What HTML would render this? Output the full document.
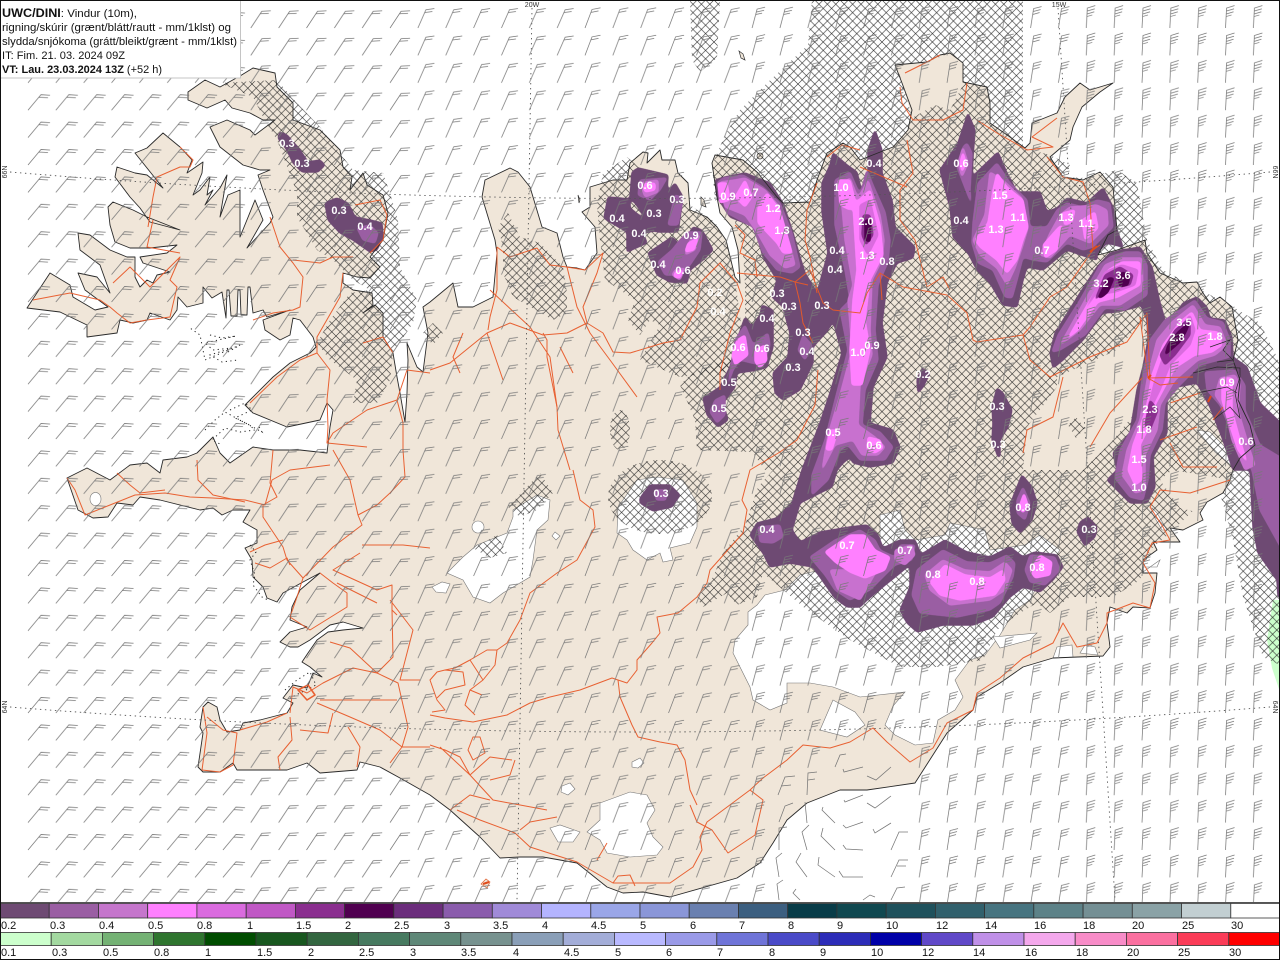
<!DOCTYPE html>
<html lang="is">
<head>
<meta charset="utf-8">
<title>UWC/DINI</title>
<style>
html,body{margin:0;padding:0;background:#fff}
svg{display:block}
.l{font:11px "Liberation Sans",sans-serif;fill:#111}
.v{font:bold 11px "Liberation Sans",sans-serif;fill:#fff;text-anchor:middle}
.h{font:11px "Liberation Sans",sans-serif;fill:#111}
.g{font:7px "Liberation Sans",sans-serif;fill:#333}
</style>
</head>
<body>
<svg xmlns="http://www.w3.org/2000/svg" width="1280" height="960" viewBox="0 0 1280 960">
<defs>
<filter id="s" filterUnits="userSpaceOnUse" x="0" y="0" width="1280" height="960" color-interpolation-filters="sRGB"><feGaussianBlur stdDeviation="1.5"/><feComponentTransfer><feFuncA type="linear" slope="6" intercept="-2.5"/></feComponentTransfer></filter>
<pattern id="x" patternUnits="userSpaceOnUse" width="8.4" height="8.4"><path d="M0,0L8.4,8.4M8.4,0L0,8.4" stroke="#222" stroke-width=".6" fill="none"/></pattern>
<pattern id="p1" patternUnits="userSpaceOnUse" x="26" y="1.6" width="27.85" height="27.4"><path d="M2,26.4L15,10.9L24,11.4M13,13.4L22,13.9" fill="none" stroke="#777" stroke-width=".75"/></pattern>
<pattern id="p2" patternUnits="userSpaceOnUse" x="26" y="1.6" width="27.85" height="27.4"><path d="M2,26.4L13,9.7L22,9.2M11.6,12.2L20,11.7" fill="none" stroke="#777" stroke-width=".75"/></pattern>
<pattern id="p3" patternUnits="userSpaceOnUse" x="26" y="1.6" width="27.85" height="27.4"><path d="M2,26.4L10,8.2L18.5,7M8.8,11L16.5,10" fill="none" stroke="#777" stroke-width=".75"/></pattern>
<pattern id="p4" patternUnits="userSpaceOnUse" x="26" y="1.6" width="27.85" height="27.4"><path d="M2,26.4L9,7.9L17.5,6.2M8,10.8L15.5,9.3" fill="none" stroke="#777" stroke-width=".75"/></pattern>
<pattern id="p5" patternUnits="userSpaceOnUse" x="26" y="1.6" width="27.85" height="27.4"><path d="M2,26.4L7,7.5L15,5.6M6.2,10.5L14,8.7M5.5,13L12,11.6" fill="none" stroke="#777" stroke-width=".75"/></pattern>
<pattern id="p6" patternUnits="userSpaceOnUse" x="26" y="1.6" width="27.85" height="27.4"><path d="M2,26.4L5,7L13,5M4.5,10L12,8M4,13L11,11" fill="none" stroke="#777" stroke-width=".75"/></pattern>
<pattern id="p7" patternUnits="userSpaceOnUse" x="26" y="1.6" width="27.85" height="27.4"><path d="M2,26.4L3,6.5L11,4M2.8,9.5L10.5,7.2M2.6,12.5L10,10.2M2.4,15L8,13.4" fill="none" stroke="#777" stroke-width=".75"/></pattern>
<path id="land" d="M188,92 205,80 220,87 240,76 253,68 275,73 277,87 293,103 293,120 320,130 340,150 343,167 352,177 350,190 363,173 367,185 383,195 388,213 383,240 370,257 380,267 370,278 357,277 343,273 343,283 353,290 372,293 373,305 363,313 375,305 383,313 383,337 393,353 397,377 400,393 405,422 407,393 408,360 407,343 417,367 423,372 428,333 423,307 430,302 453,283 458,307 473,307 493,297 497,253 495,240 482,197 485,180 510,168 518,172 530,187 542,227 557,233 563,257 567,267 577,268 585,270 597,253 595,227 582,212 590,207 590,187 613,180 627,180 630,163 643,152 648,153 647,163 660,150 662,160 675,160 678,173 688,183 690,210 707,217 717,227 726,240 735,277 740,283 738,250 732,227 720,213 717,197 712,163 715,155 743,160 758,173 777,197 783,203 810,202 817,180 827,153 843,143 850,147 860,160 893,147 908,130 912,110 902,83 895,65 927,62 940,55 950,53 963,63 963,82 987,87 990,103 990,123 1010,137 1025,148 1030,143 1032,123 1057,113 1065,97 1080,83 1090,90 1113,83 1100,92 1082,107 1073,127 1070,140 1050,157 1063,177 1083,180 1100,172 1113,187 1117,230 1108,235 1098,255 1117,250 1145,240 1147,253 1160,273 1183,283 1197,282 1203,293 1210,303 1220,297 1232,307 1238,340 1233,360 1240,380 1238,400 1250,425 1255,445 1240,458 1233,470 1230,480 1223,493 1207,502 1200,513 1203,520 1183,530 1170,528 1180,542 1153,542 1157,550 1143,560 1143,573 1157,573 1155,593 1150,608 1133,607 1127,613 1110,607 1107,623 1110,647 1103,656 1053,658 1023,667 1000,683 977,697 973,710 947,733 915,783 867,790 840,790 807,803 787,820 773,843 760,863 737,878 670,897 643,892 623,893 607,887 577,863 543,857 520,857 500,858 480,837 450,810 430,795 400,778 380,767 360,762 357,770 320,773 307,763 287,770 257,770 237,770 233,763 220,772 203,772 198,767 203,733 200,727 203,707 208,702 217,707 220,720 227,732 240,730 243,723 260,720 287,713 293,703 283,698 293,685 307,688 313,673 322,677 310,667 302,662 308,653 317,640 328,632 343,630 363,628 343,622 330,625 310,640 298,647 290,647 280,642 290,632 307,627 290,620 292,607 300,590 320,573 303,582 283,593 277,602 267,598 263,587 253,577 252,560 245,548 257,543 257,530 243,522 250,510 233,510 222,515 213,508 200,510 160,500 140,497 133,505 117,503 108,517 93,518 78,510 67,478 87,468 110,480 130,465 147,463 160,473 163,460 187,457 197,453 213,437 220,453 230,463 253,447 273,450 300,450 327,453 330,427 333,410 327,403 320,420 287,427 253,413 245,405 273,377 290,363 310,353 316,347 313,337 300,320 293,318 290,335 280,340 265,330 263,320 290,310 267,317 263,310 253,313 250,287 248,287 247,315 241,315 240,290 238,290 237,316 231,316 229,290 227,290 226,318 222,292 212,298 203,287 203,303 187,307 178,297 177,310 170,320 150,313 147,320 133,323 120,320 117,333 87,337 87,325 60,312 27,308 50,273 70,285 73,297 95,310 108,307 85,290 78,273 97,277 110,293 100,265 80,250 78,233 90,235 110,250 127,257 135,257 135,277 140,287 147,280 153,283 157,275 170,272 143,263 140,257 167,253 177,245 150,248 130,248 115,242 110,225 108,207 113,202 133,210 147,217 180,230 150,222 140,208 130,197 115,177 117,167 135,173 147,175 163,188 155,178 135,153 147,148 163,133 180,147 192,160 187,173 203,162 202,173 193,195 200,190 210,177 207,195 213,190 205,205 220,188 227,175 220,217 228,195 240,190 240,237 255,200 263,220 247,248 270,223 273,217 263,190 258,175 270,170 260,170 243,165 220,147 210,127 227,120 250,130 255,135 275,120 263,120 250,113 232,108 225,100 207,108 188,100Z"/>
</defs>
<rect width="1280" height="960" fill="#fff"/>

<!-- green precip at east edge -->
<path d="M1280,600 1273,600 1267,640 1272,668 1280,692Z" fill="#ccffcc"/>

<!-- land -->
<use href="#land" fill="#f0e6d9"/>

<!-- glaciers and lakes -->
<g fill="#fff" stroke="#777" stroke-width=".6">
<path d="M513,510 537,495 550,500 548,520 537,530 533,560 530,577 503,593 490,603 473,597 463,580 447,573 463,557 477,545 507,533 513,517Z"/>
<path d="M618,507 637,480 657,477 683,480 697,503 697,527 690,543 670,548 673,560 663,562 660,553 647,560 633,550 627,540 617,533Z"/>
<path d="M600,803 630,792 647,795 655,810 647,823 653,837 663,847 657,855 630,857 607,853 600,840 587,832 600,820Z"/>
<path d="M550,828 560,825 580,832 573,842 558,842Z"/>
<path d="M748,612 757,605 765,595 785,590 800,575 840,565 880,540 880,515 900,510 905,530 915,540 945,535 950,523 985,530 990,550 1025,545 1040,535 1060,550 1040,580 1030,600 1015,610 1000,635 985,655 970,660 955,680 963,697 955,710 938,720 933,743 915,745 905,740 895,735 885,725 893,706 905,692 860,697 833,687 810,683 787,683 787,703 770,710 753,700 750,687 743,673 733,653 735,640 748,625Z"/>
<path d="M833,700 820,730 847,737 865,725 855,712Z"/>
<path d="M472,527a6,6 0 1,0 12,0a6,6 0 1,0 -12,0Z"/>
<path d="M90,499a5,6 0 1,0 11,0a5,6 0 1,0 -11,0Z"/>
<path d="M555,532 560,536 556,540 552,536Z"/>
<path d="M432,587 442,582 450,584 446,593 436,592Z"/>
<path d="M562,786 570,783 575,789 568,795 561,792Z"/>
<path d="M632,762 640,758 644,763 638,768 632,767Z"/>
<path d="M1057,647 1072,645 1073,657 1053,658Z"/>
<path d="M1080,653 1085,645 1095,647 1098,655Z"/>
<path d="M1143,567 1157,567 1160,560 1143,572Z"/>
<path d="M1152,508 1157,513 1167,530 1162,530 1152,513Z"/>
<path d="M1208,488 1225,490 1208,492Z"/>
<path d="M1197,430 1210,432 1233,455 1233,467 1215,452Z"/>
<path d="M993,637 1037,633 1030,640 1000,648Z"/>
</g>
<!-- islands -->
<g fill="#f0e6d9" stroke="#333" stroke-width=".7">
<path d="M739,51 743,54 745,60 741,58Z"/>
<path d="M701,197 704,200 706,207 701,205Z"/>
<path d="M578,195 580,200 579,203Z"/>
<path d="M757,156a3,3 0 1,0 6,0a3,3 0 1,0 -6,0Z"/>
<path d="M481,884 486,879 490,882 487,888Z" stroke="#e0602e"/>
</g>
<g fill="none" stroke="#222" stroke-width="1" stroke-dasharray="1.2 3.4">
<path d="M210,335 222,338 236,336 205,343 213,350 232,348 210,355 222,362 238,360"/>
<path d="M228,352 240,345 205,360 200,335 190,328"/>
<path d="M230,410 245,403 252,410 235,418 248,424 255,430 240,432 225,428 212,440 222,445"/>
<path d="M205,430 215,420 225,412 262,432 258,425"/>
<path d="M250,545 256,552 250,560 255,575 253,585 262,597 268,600"/>
<path d="M285,690 297,680 310,672 316,685 290,698"/>
</g>

<!-- snow hatch -->
<g fill="url(#x)">
<path d="M220,83 277,80 297,103 320,127 343,157 353,170 383,173 390,193 398,220 400,267 417,300 413,323 393,353 390,380 377,403 353,403 357,380 330,360 317,343 330,320 350,293 370,290 353,280 333,260 317,250 297,217 297,193 277,140 263,117 253,97Z"/>
<path d="M508,213 520,237 540,243 563,267 567,293 567,313 553,320 513,297 503,273 503,247 498,227Z"/>
<path d="M433,323 443,333 433,345 423,333Z"/>
<ellipse cx="620" cy="430" rx="10" ry="20"/>
<ellipse cx="660" cy="497" rx="52" ry="37"/>
<path d="M508,507 540,473 553,493 537,510 520,517Z"/>
<path d="M473,548 497,535 507,553 490,558Z"/>
<path d="M690,0 720,0 717,58 700,72 692,60Z"/>
<path d="M603,173 627,157 660,185 690,205 715,222 727,245 735,280 742,330 742,370 680,377 640,360 660,325 650,320 640,335 628,320 635,300 605,280 600,240 597,205Z"/>
<path d="M812,0 1023,0 1023,148 1032,150 1050,155 1070,165 1063,177 1085,178 1117,170 1137,183 1147,240 1163,270 1233,307 1260,323 1277,357 1280,365 1280,665 1263,657 1243,597 1233,540 1222,500 1217,490 1197,507 1170,533 1150,550 1140,580 1113,597 1070,597 1050,613 1037,603 1020,613 997,630 983,660 937,667 900,667 850,640 807,610 763,573 757,597 737,605 727,593 703,607 697,598 713,577 723,553 745,525 758,487 773,470 765,470 752,452 697,450 695,420 680,385 690,375 745,350 745,285 743,250 733,215 715,200 712,165 725,135 740,110 765,85 808,45Z"/>
</g>
<!-- unhatched land windows -->
<g fill="#f0e6d9">
<path d="M897,65 927,62 950,53 963,63 963,85 950,110 935,105 912,118 910,110Z"/>
<path d="M1057,377 1117,350 1143,320 1150,373 1140,407 1113,440 1083,470 1023,470 1027,427 1057,387Z"/>
<path d="M1160,480 1172,470 1232,480 1222,493 1207,502 1200,513 1180,508Z"/>
</g>
<path d="M1068,425 1076,417 1085,428 1076,438Z" fill="url(#x)"/>

<!-- precipitation -->
<g stroke-linejoin="round" stroke-width="1.5">
<path filter="url(#s)" fill="#6e4a73" stroke="#6e4a73" d="M280,132 287,135 300,150 308,162 320,160 325,165 318,172 302,172 293,163 287,150 278,138Z
M325,203 337,198 348,203 355,217 370,220 382,223 383,237 377,250 370,252 353,240 340,233 328,220Z
M632,172 638,168 668,175 667,193 675,183 683,197 678,232 657,232 652,223 645,217 635,203 630,197Z
M608,197 630,199 630,208 647,222 660,230 643,233 647,243 627,252 627,232 610,222 604,218Z
M672,237 678,243 677,257 685,240 693,227 702,230 713,250 703,260 690,270 687,283 670,282 657,275 652,263 648,253Z
M715,180 725,177 745,173 770,183 783,203 793,233 800,257 805,273 817,293 828,253 822,212 822,183 830,165 833,153 847,165 857,172 862,193 868,175 868,150 875,130 882,150 882,173 892,200 895,227 915,247 913,258 897,263 887,283 882,323 887,357 873,387 870,423 893,430 900,447 893,463 870,467 853,463 850,457 843,463 837,470 832,487 800,503 792,530 800,542 820,532 850,527 867,525 878,535 883,548 900,540 915,540 920,552 907,567 900,573 885,585 867,600 860,607 847,607 835,598 827,587 813,567 790,563 770,567 763,553 750,535 757,523 777,518 792,503 802,470 820,423 830,393 842,353 833,320 828,330 813,347 813,363 800,390 783,400 775,393 773,373 788,357 790,333 783,307 772,297 777,280 763,257 755,227 730,217 717,197Z
M968,113 975,130 973,157 972,180 977,172 998,152 1007,173 1017,192 1040,192 1047,212 1057,208 1067,198 1087,203 1093,197 1103,188 1113,207 1117,230 1123,247 1107,243 1097,253 1097,260 1087,257 1067,250 1043,270 1027,267 1023,280 1017,307 1003,305 990,283 977,270 968,253 953,237 950,207 940,170 958,143Z
M1143,252 1152,267 1160,303 1167,327 1183,303 1197,297 1207,307 1210,318 1225,320 1232,337 1233,357 1247,367 1260,403 1285,427 1285,597 1278,597 1277,580 1258,553 1253,527 1250,470 1233,470 1223,440 1210,407 1197,383 1177,387 1167,400 1167,433 1153,457 1155,487 1147,503 1130,503 1107,480 1117,470 1113,453 1130,433 1137,390 1143,367 1148,340 1147,320 1140,303 1137,307 1117,312 1103,313 1083,340 1063,360 1053,368 1050,353 1055,333 1080,293 1097,267 1110,253 1123,250 1140,247Z
M640,498 650,485 670,485 680,495 672,507 653,511 640,503Z
M917,380 922,368 930,373 923,387 918,393Z
M997,388 1003,393 1012,410 1008,427 1000,440 1000,457 998,457 992,440 993,423 992,407Z
M1022,475 1032,487 1037,503 1032,520 1020,533 1012,523 1010,505 1017,487Z
M1088,517 1097,527 1095,537 1085,546 1077,532 1080,522Z
M900,610 910,587 910,563 920,555 945,540 967,552 990,557 1010,547 1023,557 1035,552 1057,555 1063,567 1053,580 1040,592 1023,587 1010,597 993,617 973,625 943,625 917,632 907,623Z
M745,317 752,327 760,315 762,305 773,310 773,347 767,367 758,370 737,373 735,387 723,403 728,420 718,427 707,415 703,398 720,387 730,367 738,337Z"/>
<path filter="url(#s)" fill="#9a5ea3" stroke="#9a5ea3" d="M357,228 370,225 378,233 375,243 363,240Z
M640,180 667,178 660,190 650,200 638,195Z
M675,195 683,198 678,225 668,225Z
M688,232 702,232 700,250 690,265 680,275 665,275 658,262 672,250 680,240Z
M717,183 723,178 743,175 763,187 780,203 792,233 800,267 792,273 777,270 763,253 753,227 727,213Z
M835,180 850,172 860,195 867,170 873,185 885,212 890,240 888,262 878,285 875,330 878,360 865,390 862,425 880,432 893,447 885,460 860,460 848,445 840,450 828,480 812,495 812,475 825,440 835,400 848,350 840,310 850,300 845,270 835,225Z
M967,143 972,153 970,190 971,203 957,167 963,147Z
M997,163 1010,183 1027,200 1030,227 1047,227 1057,210 1067,203 1083,207 1097,200 1110,203 1113,227 1093,247 1083,250 1067,243 1047,262 1033,260 1023,257 1017,280 1012,298 1005,297 993,270 978,263 972,243 973,223 978,183Z
M1052,352 1058,335 1080,300 1100,265 1110,257 1125,252 1140,252 1147,265 1147,295 1125,310 1105,308 1085,335 1060,350Z
M1195,300 1207,318 1223,322 1230,340 1230,357 1200,365 1190,375 1180,385 1165,403 1162,430 1150,455 1148,480 1143,500 1130,497 1115,478 1120,450 1137,420 1142,380 1150,340 1165,320Z
M1205,372 1235,370 1245,385 1245,410 1260,445 1285,460 1285,555 1260,510 1252,470 1235,440 1220,405 1207,390Z
M656,490 666,490 666,500 656,500Z
M1023,487 1030,503 1025,520 1017,513 1017,500Z
M912,595 917,570 943,550 967,562 990,563 1007,555 1015,563 1013,577 1000,603 990,610 957,617 920,613Z
M1025,570 1030,555 1055,557 1060,570 1045,585 1030,582Z
M810,557 835,540 860,530 875,540 880,550 895,557 900,545 915,545 912,560 895,565 870,590 850,600 835,590 825,575Z
M758,527 780,525 783,537 773,543 760,542Z
M745,325 753,345 768,333 770,345 763,365 752,363 740,360 733,370 728,385 735,340Z
M715,400 725,395 725,415 717,423 710,412Z
M803,335 812,345 805,360 798,350Z"/>
<path filter="url(#s)" fill="#c871cf" stroke="#c871cf" d="M720,182 735,180 745,178 765,190 778,205 790,245 795,265 785,268 770,255 757,232 745,215 725,207Z
M840,185 850,178 858,198 868,180 880,215 884,240 882,260 872,280 870,330 872,355 860,385 858,425 875,437 885,447 878,455 862,455 853,440 835,445 822,470 828,435 840,395 852,350 848,300 853,285 845,240Z
M963,147 968,163 962,177 958,163Z
M990,172 1003,180 1022,198 1028,228 1022,248 1015,268 1007,285 997,268 980,255 973,240 985,215Z
M1050,233 1060,215 1070,207 1097,205 1107,210 1108,225 1090,243 1070,235 1050,258 1040,255Z
M1060,345 1085,300 1105,265 1122,258 1142,258 1143,290 1120,305 1100,305 1080,330Z
M1193,305 1205,325 1220,327 1227,345 1215,355 1198,360 1175,380 1160,405 1157,430 1145,455 1145,490 1135,493 1122,475 1127,450 1140,420 1148,375 1157,340 1172,322Z
M1220,378 1235,375 1240,385 1238,410 1250,450 1255,465 1245,470 1232,440 1225,410 1215,395Z
M690,240 700,235 695,250 685,255Z
M675,270 685,268 680,280 672,275Z
M930,590 925,575 943,560 965,570 990,572 1005,562 1012,570 1005,590 990,600 950,605Z
M895,550 912,545 915,555 905,565 895,560Z
M855,570 880,565 860,600 838,590 830,570Z
M640,183 658,180 658,192 645,197Z"/>
<path filter="url(#s)" fill="#ff80ff" stroke="#ff80ff" d="M718,183 727,183 730,200 720,203Z
M767,193 780,210 792,253 783,253 777,243 758,223 758,207Z
M745,180 752,197 745,207 735,197Z
M838,180 850,180 855,200 850,210 840,205Z
M853,205 870,190 880,225 883,255 870,280 865,320 870,350 862,385 852,385 850,350 853,300 857,270Z
M830,430 838,430 832,450 826,450Z
M868,437 880,440 883,448 875,453 867,450Z
M963,152 966,163 962,172 960,163Z
M997,173 1007,187 1023,200 1028,227 1023,240 1017,260 1007,273 997,260 980,247 975,240 988,223 993,190Z
M1043,245 1058,228 1062,225 1057,250 1045,258Z
M1062,213 1075,210 1072,222 1065,225Z
M1082,220 1095,212 1098,228 1085,240Z
M1068,338 1090,300 1108,270 1122,262 1140,262 1140,285 1118,297 1098,302 1078,330Z
M1192,312 1200,330 1218,332 1222,345 1212,352 1195,355 1175,368 1155,405 1150,425 1140,445 1142,480 1135,485 1128,470 1133,445 1146,410 1152,375 1163,345 1180,322Z
M1222,378 1232,378 1232,410 1240,440 1247,462 1238,450 1228,420 1222,400Z
M1024,493 1028,505 1023,513 1019,507Z
M930,582 945,565 965,575 990,578 1003,570 1005,580 995,595 960,600 940,595Z
M1030,570 1040,555 1052,562 1050,575 1035,578Z
M825,552 850,535 865,535 875,550 890,557 885,570 865,578 850,572 835,562Z
M737,340 745,335 748,355 735,365 732,355Z
M755,350 765,345 767,360 760,368 755,362Z
M688,243 698,238 694,250 685,252Z
M675,272 683,270 680,278 674,277Z
M642,184 655,183 655,190 645,192Z"/>
<path filter="url(#s)" fill="#da6bdf" stroke="#da6bdf" d="M860,205 870,200 878,235 868,255 860,240Z
M1085,310 1105,272 1122,265 1138,270 1135,285 1115,292 1095,295Z
M1190,315 1195,330 1190,345 1170,365 1160,390 1150,410 1145,420 1155,380 1167,345 1182,325Z"/>
<path filter="url(#s)" fill="#8a2e8f" stroke="#8a2e8f" d="M863,215 870,215 873,235 866,245 862,235Z
M1095,300 1105,275 1120,267 1133,275 1130,285 1112,287 1100,295Z
M1190,318 1190,335 1175,355 1165,365 1160,355 1175,330Z
M1150,400 1158,410 1150,430 1145,425Z"/>
<path filter="url(#s)" fill="#500050" stroke="#500050" d="M865,220 871,220 870,242 865,240Z
M1098,298 1108,278 1114,278 1108,292 1102,297Z
M1122,272 1130,275 1128,285 1120,287 1118,278Z
M1190,322 1186,332 1180,342 1165,355 1168,345 1178,332Z"/>
</g>

<!-- coast outline -->
<use href="#land" fill="none" stroke="#2a2a2a" stroke-width=".9" stroke-linejoin="round"/>
<g fill="none" stroke="#2a2a2a" stroke-width=".7">
<path d="M1210,347 1230,340 1223,350 1233,360 1217,362"/>
<path d="M1193,373 1217,367 1240,368 1240,377 1235,393 1237,403 1240,418 1230,407 1213,420"/>
<path d="M1197,393 1227,387 1237,393"/>
</g>

<!-- roads -->
<g fill="none" stroke="#e85a2a" stroke-width="1" stroke-linejoin="round" opacity=".95">
<path d="M67,478 75,490 85,515 110,505 135,495 165,493 190,497 213,498 245,500 265,505 272,480 290,470 330,465"/>
<path d="M117,473 130,485 140,493 165,490M197,460 198,480 213,495 245,502"/>
<path d="M273,450 270,483 277,497 263,505 263,517 283,547 287,560 303,578 333,547 362,525 358,515 350,480 333,450"/>
<path d="M358,515 377,505 390,493 405,477 403,450 403,423 397,400 407,370 430,373"/>
<path d="M250,552 265,545 283,540M255,563 270,568 287,558 290,565"/>
<path d="M303,578 297,597 290,617 310,630 347,607 347,593 333,583 320,573M337,583 377,603"/>
<path d="M362,545 403,545 430,548M360,553 333,570 377,590 392,585 392,610 397,615"/>
<path d="M392,610 393,657 377,673 350,648 330,642M390,600 413,630 400,680 420,680"/>
<path d="M317,703 350,717 380,730 402,747 430,747M290,713 293,687 307,693 323,683 353,668 377,673 398,683 408,727 402,747 390,763"/>
<path d="M203,707 207,733 202,770 220,772 233,765 237,733 223,730 207,717M287,713 267,722 240,730"/>
<path d="M290,717 292,740 278,757 280,770M300,730 328,733 333,713M348,727 360,747 357,767M320,700 337,700 397,700"/>
<path d="M298,690 307,700 315,695 308,685Z" stroke-width="1.6"/>
<path d="M430,715 445,718 473,722 507,715 530,703 550,697 580,690 612,678 627,683 637,670 637,660 652,643 660,633 657,617 678,613 697,597 707,583 710,570 743,533 747,510 742,500 750,470 780,452 797,440 815,405 818,370"/>
<path d="M573,470 580,500 593,510 595,527 577,560 557,573 530,593 520,620 507,643 497,650 487,650 470,660"/>
<path d="M543,333 547,340 547,357 557,407 558,430 570,470"/>
<path d="M470,660 455,668 445,670 437,672 430,680 437,700 445,710 432,712M470,660 483,680 495,665 497,650M483,680 470,690 465,705 475,715M470,690 482,695M445,670 463,672 465,685 445,690 437,698"/>
<path d="M430,745 445,750 460,757 470,775 493,800 547,810M440,747 470,775M520,830 530,822 557,817M450,810 470,795 490,800M470,775 490,757 512,760M490,780 510,775 515,760M473,737 468,750 473,760 485,753 480,737Z"/>
<path d="M457,810 480,820 515,833 530,847 577,862 613,883 633,883 670,883 693,867 702,850 700,837 707,822 750,790 763,778 787,760 803,745 830,748 850,742 873,728 887,742 910,762 933,748 947,723 973,710 977,693 1000,678 1023,658 1053,643 1063,623 1077,647 1097,643 1107,623 1107,613 1133,603 1150,608 1155,583 1143,563 1152,543 1170,540 1163,527 1150,507 1160,490 1190,493 1230,480"/>
<path d="M750,790 763,800 755,835 728,853 712,830 697,822 690,805M618,680 620,697 632,725 638,737 660,742 677,745 685,760 690,790 697,805M597,860 607,843"/>
<path d="M613,883 618,876 630,875 635,886"/>
<path d="M497,247 510,257 537,248 550,265 567,267 585,270 603,253 597,273 583,307 587,323 603,333 613,352 630,353 663,343 680,340 697,307 700,283 720,263 737,283 743,300 730,333 720,373 720,390"/>
<path d="M430,370 450,363 487,333 510,323 543,335 567,333 587,323M490,290 530,327 550,357 557,407M573,373 560,347"/>
<path d="M567,267 577,307 590,333 610,360 637,397M487,333 503,380M497,247 497,290 490,317 488,330M463,333 453,357 460,373"/>
<path d="M33,300 70,293 100,300 110,307 117,313 130,323 147,320 170,317 177,287 170,280 180,257 150,287 130,267 113,283M148,227 153,197 157,177 180,167 190,167 193,160 180,147M153,220 147,247 180,253"/>
<path d="M270,217 280,247 293,263 303,277 300,307 293,310 273,313 253,320M293,260 320,263 333,257 353,257M343,273 340,297 317,337 317,353 330,370 327,400 328,427 327,443 367,447"/>
<path d="M317,353 300,360 277,377 250,403M397,400 367,410 333,433 327,443M403,423 403,450"/>
<path d="M355,205 380,200 387,215 383,240 370,253M363,343 383,337 393,353"/>
<path d="M807,210 805,240 810,257 817,293M827,157 842,145 860,150M817,183 807,210"/>
<path d="M757,277 755,260 740,253 745,235 735,225"/>
<path d="M737,273 780,277 795,282 800,303 803,323 813,343M795,282 810,270 823,303 833,310 860,313 867,293 880,273 903,287 947,295 967,313 973,340 977,342 1023,335 1030,360 1050,377 1090,357 1127,342 1147,313 1150,380 1148,378 1193,377"/>
<path d="M795,282 808,285 M1063,377 1053,417 1027,430 1023,453M1110,413 1090,447M1143,377 1110,413"/>
<path d="M1170,403 1200,393M1160,440 1197,427M1223,407 1213,420M1170,443 1183,467 1217,467"/>
<path d="M900,87 902,103 913,120 943,120 963,110 967,83M905,73 927,62 940,55M977,120 997,133 1027,150 1053,147 1032,137 1057,118"/>
<path d="M1047,157 1063,177 1083,182 1090,203 1093,250 1067,287 1050,297 1030,327 1023,335"/>
<path d="M907,140 913,173 900,190 900,220 915,240 927,287 943,277 950,290M860,167 907,187M880,273 882,300"/>
<path d="M1140,317 1148,378M1148,378 1160,385 1178,383M1093,250 1100,245"/>
</g>
<path d="M1090,252 1097,246M1148,378l3,-3M1208,402l3,-6M483,884l6,-2" stroke="#e04a1a" stroke-width="2" fill="none"/>

<!-- grid -->
<g fill="none" stroke="#555" stroke-width=".9" stroke-dasharray="1.4 3.6">
<path d="M10,172Q640,225 1270,172"/>
<path d="M10,707Q640,757 1270,707"/>
<path d="M532,8L517,900"/>
<path d="M1058,8L1115,900"/>
</g>
<text class="g" x="532" y="7" text-anchor="middle">20W</text>
<text class="g" x="1059" y="7" text-anchor="middle">15W</text>
<text class="g" transform="translate(7,172) rotate(-90)" text-anchor="middle">66N</text>
<text class="g" transform="translate(1273,172) rotate(90)" text-anchor="middle">66N</text>
<text class="g" transform="translate(7,707) rotate(-90)" text-anchor="middle">64N</text>
<text class="g" transform="translate(1273,707) rotate(90)" text-anchor="middle">64N</text>

<!-- wind barbs -->
<rect x="26" y="0" width="222.8" height="902" fill="url(#p1)"/>
<rect x="248.8" y="0" width="167.1" height="902" fill="url(#p2)"/>
<rect x="415.9" y="0" width="167.1" height="902" fill="url(#p3)"/>
<rect x="583" y="0" width="167.1" height="902" fill="url(#p4)"/>
<rect x="750.1" y="0" width="27.85" height="902" fill="url(#p5)"/>
<rect x="777.95" y="0" width="55.7" height="768.8" fill="url(#p5)"/>
<rect x="833.65" y="0" width="83.55" height="741.4" fill="url(#p5)"/>
<rect x="917.2" y="0" width="167.1" height="902" fill="url(#p6)"/>
<rect x="1084.3" y="0" width="195" height="902" fill="url(#p7)"/>
<g fill="none" stroke="#777" stroke-width=".75">
<path d="M835,767 840,755 846,754"/>
<path d="M863,767 844,772 843,769M891,767 876,780 867,776"/>
<path d="M863,795 845,802 844,800M891,796 875,808 867,803"/>
<path d="M778,795 785,777 795,776M781,786 791,785M807,795 808,773 817,772M808,780 815,779"/>
<path d="M835,823 822,810 823,807M863,822 846,828 843,825M891,823 875,833 873,829"/>
<path d="M779,822 785,806 793,803M807,823 805,802"/>
<path d="M779,850 779,828 787,827M807,850 802,832 809,825M835,850 821,836 823,828M863,850 846,849 843,845M891,850 899,832 908,832"/>
<path d="M779,877 776,858 782,853M807,877 796,862 801,853M835,877 818,865 819,857M863,877 843,877 839,871M891,877 899,860 908,860M897,866 906,866"/>
<path d="M779,900 777,884 783,880M800,900 793,893 796,889M863,900 870,895 875,897M891,900 897,888 905,887"/>
</g>

<!-- value labels -->
<g>
<text class="v" x="287" y="147">0.3</text><text class="v" x="302" y="167">0.3</text><text class="v" x="339" y="214">0.3</text><text class="v" x="365" y="230">0.4</text>
<text class="v" x="645" y="189">0.6</text><text class="v" x="677" y="203">0.3</text><text class="v" x="617" y="222">0.4</text><text class="v" x="654" y="217">0.3</text><text class="v" x="639" y="237">0.4</text><text class="v" x="691" y="239">0.9</text><text class="v" x="658" y="268">0.4</text><text class="v" x="683" y="274">0.6</text>
<text class="v" x="728" y="200">0.9</text><text class="v" x="751" y="196">0.7</text><text class="v" x="773" y="212">1.2</text><text class="v" x="782" y="234">1.3</text>
<text class="v" x="837" y="254">0.4</text><text class="v" x="835" y="273">0.4</text><text class="v" x="777" y="297">0.3</text><text class="v" x="789" y="310">0.3</text><text class="v" x="822" y="309">0.3</text><text class="v" x="803" y="336">0.3</text><text class="v" x="807" y="355">0.4</text><text class="v" x="793" y="371">0.3</text><text class="v" x="767" y="322">0.4</text><text class="v" x="738" y="351">0.6</text><text class="v" x="762" y="352">0.6</text><text class="v" x="729" y="386">0.5</text><text class="v" x="719" y="412">0.5</text>
<text class="v" x="841" y="191">1.0</text><text class="v" x="833" y="436">0.5</text><text class="v" x="715" y="296">0.2</text><text class="v" x="718" y="315">0.4</text>
<text class="v" x="961" y="167">0.6</text><text class="v" x="961" y="224">0.4</text><text class="v" x="1000" y="199">1.5</text><text class="v" x="1018" y="221">1.1</text><text class="v" x="996" y="233">1.3</text><text class="v" x="1066" y="221">1.3</text><text class="v" x="1086" y="227">1.1</text><text class="v" x="1042" y="254">0.7</text>
<text class="v" x="874" y="167">0.4</text><text class="v" x="866" y="225">2.0</text><text class="v" x="867" y="259">1.3</text><text class="v" x="887" y="265">0.8</text><text class="v" x="858" y="356">1.0</text><text class="v" x="872" y="349">0.9</text><text class="v" x="874" y="449">0.6</text>
<text class="v" x="923" y="378">0.2</text><text class="v" x="997" y="410">0.3</text><text class="v" x="998" y="448">0.3</text>
<text class="v" x="1101" y="287">3.2</text><text class="v" x="1123" y="279">3.6</text><text class="v" x="1184" y="326">3.5</text><text class="v" x="1177" y="341">2.8</text><text class="v" x="1215" y="340">1.8</text><text class="v" x="1227" y="386">0.9</text><text class="v" x="1150" y="413">2.3</text><text class="v" x="1144" y="433">1.8</text><text class="v" x="1139" y="463">1.5</text><text class="v" x="1246" y="445">0.6</text>
<text class="v" x="1139" y="491">1.0</text><text class="v" x="1023" y="511">0.8</text><text class="v" x="1089" y="533">0.3</text><text class="v" x="1037" y="571">0.8</text><text class="v" x="933" y="578">0.8</text><text class="v" x="977" y="585">0.8</text><text class="v" x="905" y="554">0.7</text><text class="v" x="847" y="549">0.7</text><text class="v" x="767" y="533">0.4</text><text class="v" x="661" y="497">0.3</text>
</g>

<!-- legend -->
<rect x="0" y="902" width="1280" height="58" fill="#fff"/>
<path d="M0,902.5H1280" stroke="#555"/>
<g stroke="#333" stroke-width=".8">
<rect x="0" y="903.5" width="49.2" height="14.5" fill="#6e4a73"/><rect x="49.2" y="903.5" width="49.3" height="14.5" fill="#9a5ea3"/><rect x="98.5" y="903.5" width="49.2" height="14.5" fill="#c576cc"/><rect x="147.7" y="903.5" width="49.2" height="14.5" fill="#ff80ff"/><rect x="196.9" y="903.5" width="49.3" height="14.5" fill="#da6bdf"/><rect x="246.2" y="903.5" width="49.2" height="14.5" fill="#c058c5"/><rect x="295.4" y="903.5" width="49.2" height="14.5" fill="#8a2e8f"/><rect x="344.6" y="903.5" width="49.2" height="14.5" fill="#500050"/><rect x="393.8" y="903.5" width="49.3" height="14.5" fill="#6b2d7c"/><rect x="443.1" y="903.5" width="49.2" height="14.5" fill="#8a5cac"/><rect x="492.3" y="903.5" width="49.2" height="14.5" fill="#a08ad8"/><rect x="541.5" y="903.5" width="49.3" height="14.5" fill="#b4b4ff"/><rect x="590.8" y="903.5" width="49.2" height="14.5" fill="#9aa6e8"/><rect x="640" y="903.5" width="49.2" height="14.5" fill="#8a96d8"/><rect x="689.2" y="903.5" width="49.3" height="14.5" fill="#6a80b0"/><rect x="738.5" y="903.5" width="49.2" height="14.5" fill="#3c5f80"/><rect x="787.7" y="903.5" width="49.2" height="14.5" fill="#083c48"/><rect x="836.9" y="903.5" width="49.3" height="14.5" fill="#104850"/><rect x="886.2" y="903.5" width="49.2" height="14.5" fill="#1f515c"/><rect x="935.4" y="903.5" width="49.2" height="14.5" fill="#31606c"/><rect x="984.6" y="903.5" width="49.2" height="14.5" fill="#477480"/><rect x="1033.8" y="903.5" width="49.3" height="14.5" fill="#5d8288"/><rect x="1083.1" y="903.5" width="49.2" height="14.5" fill="#748f94"/><rect x="1132.3" y="903.5" width="49.2" height="14.5" fill="#8aa2a6"/><rect x="1181.5" y="903.5" width="49.3" height="14.5" fill="#c2cfd2"/><rect x="1230.8" y="903.5" width="49.2" height="14.5" fill="#fff"/>
<rect x="0" y="932.5" width="51.2" height="13" fill="#ccffcc"/><rect x="51.2" y="932.5" width="51.2" height="13" fill="#a3d9a0"/><rect x="102.4" y="932.5" width="51.2" height="13" fill="#74b274"/><rect x="153.6" y="932.5" width="51.2" height="13" fill="#2f752f"/><rect x="204.8" y="932.5" width="51.2" height="13" fill="#004d00"/><rect x="256" y="932.5" width="51.2" height="13" fill="#18571f"/><rect x="307.2" y="932.5" width="51.2" height="13" fill="#336640"/><rect x="358.4" y="932.5" width="51.2" height="13" fill="#477a60"/><rect x="409.6" y="932.5" width="51.2" height="13" fill="#5f8878"/><rect x="460.8" y="932.5" width="51.2" height="13" fill="#77928f"/><rect x="512" y="932.5" width="51.2" height="13" fill="#8a9fb8"/><rect x="563.2" y="932.5" width="51.2" height="13" fill="#a3add8"/><rect x="614.4" y="932.5" width="51.2" height="13" fill="#b9b9ff"/><rect x="665.6" y="932.5" width="51.2" height="13" fill="#9a9ae8"/><rect x="716.8" y="932.5" width="51.2" height="13" fill="#6f74d8"/><rect x="768" y="932.5" width="51.2" height="13" fill="#4a4ac8"/><rect x="819.2" y="932.5" width="51.2" height="13" fill="#2c2cb8"/><rect x="870.4" y="932.5" width="51.2" height="13" fill="#0000a8"/><rect x="921.6" y="932.5" width="51.2" height="13" fill="#6048c8"/><rect x="972.8" y="932.5" width="51.2" height="13" fill="#c090e8"/><rect x="1024" y="932.5" width="51.2" height="13" fill="#f4a8ec"/><rect x="1075.2" y="932.5" width="51.2" height="13" fill="#f88cc8"/><rect x="1126.4" y="932.5" width="51.2" height="13" fill="#fb70a0"/><rect x="1177.6" y="932.5" width="51.2" height="13" fill="#fb3c58"/><rect x="1228.8" y="932.5" width="51.2" height="13" fill="#ff0000"/>
</g>
<g>
<text class="l" x="1" y="929">0.2</text><text class="l" x="50" y="929">0.3</text><text class="l" x="99" y="929">0.4</text><text class="l" x="148" y="929">0.5</text><text class="l" x="197" y="929">0.8</text><text class="l" x="247" y="929">1</text><text class="l" x="296" y="929">1.5</text><text class="l" x="345" y="929">2</text><text class="l" x="394" y="929">2.5</text><text class="l" x="444" y="929">3</text><text class="l" x="493" y="929">3.5</text><text class="l" x="542" y="929">4</text><text class="l" x="591" y="929">4.5</text><text class="l" x="640" y="929">5</text><text class="l" x="690" y="929">6</text><text class="l" x="739" y="929">7</text><text class="l" x="788" y="929">8</text><text class="l" x="837" y="929">9</text><text class="l" x="886" y="929">10</text><text class="l" x="936" y="929">12</text><text class="l" x="985" y="929">14</text><text class="l" x="1034" y="929">16</text><text class="l" x="1083" y="929">18</text><text class="l" x="1132" y="929">20</text><text class="l" x="1182" y="929">25</text><text class="l" x="1231" y="929">30</text>
<text class="l" x="1" y="956">0.1</text><text class="l" x="52" y="956">0.3</text><text class="l" x="103" y="956">0.5</text><text class="l" x="154" y="956">0.8</text><text class="l" x="205" y="956">1</text><text class="l" x="257" y="956">1.5</text><text class="l" x="308" y="956">2</text><text class="l" x="359" y="956">2.5</text><text class="l" x="410" y="956">3</text><text class="l" x="461" y="956">3.5</text><text class="l" x="513" y="956">4</text><text class="l" x="564" y="956">4.5</text><text class="l" x="615" y="956">5</text><text class="l" x="666" y="956">6</text><text class="l" x="717" y="956">7</text><text class="l" x="769" y="956">8</text><text class="l" x="820" y="956">9</text><text class="l" x="871" y="956">10</text><text class="l" x="922" y="956">12</text><text class="l" x="973" y="956">14</text><text class="l" x="1025" y="956">16</text><text class="l" x="1076" y="956">18</text><text class="l" x="1127" y="956">20</text><text class="l" x="1178" y="956">25</text><text class="l" x="1229" y="956">30</text>
</g>
<path d="M0,959.5H1280" stroke="#111"/>

<!-- border -->
<path d="M.5,0V960M1279.5,0V960" stroke="#111"/>

<!-- header box -->
<rect x="0" y="0" width="241" height="78" fill="#fff"/>
<path d="M240.5,0V78H0" fill="none" stroke="#c4c4c4"/>
<path d="M0,.5H1280M.5,0V960" stroke="#111"/>
<text class="h" x="2" y="17" textLength="135" lengthAdjust="spacingAndGlyphs"><tspan font-weight="bold" font-size="12">UWC/DINI</tspan>: Vindur (10m),</text>
<text class="h" x="2" y="31" textLength="229" lengthAdjust="spacingAndGlyphs">rigning/skúrir (grænt/blátt/rautt - mm/1klst) og</text>
<text class="h" x="2" y="45" textLength="235" lengthAdjust="spacingAndGlyphs">slydda/snjókoma (grátt/bleikt/grænt - mm/1klst)</text>
<text class="h" x="2" y="59" textLength="123" lengthAdjust="spacingAndGlyphs">IT: Fim. 21. 03. 2024 09Z</text>
<text class="h" x="2" y="73" textLength="160" lengthAdjust="spacingAndGlyphs"><tspan font-weight="bold">VT: Lau. 23.03.2024 13Z</tspan> (+52 h)</text>
</svg>
</body>
</html>
